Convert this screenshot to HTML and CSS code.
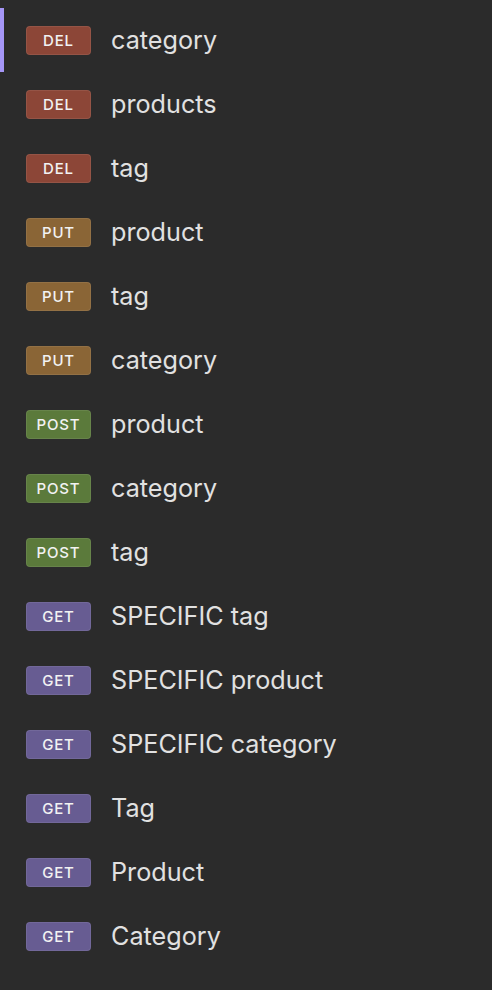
FILE: index.html
```html
<!DOCTYPE html>
<html lang="en">
<head>
<meta charset="utf-8">
<title>Requests</title>
<link rel="stylesheet" href="styles.css">
</head>
<body>
<ul class="req-list">
  <li class="req active"><span class="badge del">DEL</span><span class="name">category</span></li>
  <li class="req"><span class="badge del">DEL</span><span class="name">products</span></li>
  <li class="req"><span class="badge del">DEL</span><span class="name">tag</span></li>
  <li class="req"><span class="badge put">PUT</span><span class="name">product</span></li>
  <li class="req"><span class="badge put">PUT</span><span class="name">tag</span></li>
  <li class="req"><span class="badge put">PUT</span><span class="name">category</span></li>
  <li class="req"><span class="badge post">POST</span><span class="name">product</span></li>
  <li class="req"><span class="badge post">POST</span><span class="name">category</span></li>
  <li class="req"><span class="badge post">POST</span><span class="name">tag</span></li>
  <li class="req"><span class="badge get">GET</span><span class="name">SPECIFIC tag</span></li>
  <li class="req"><span class="badge get">GET</span><span class="name">SPECIFIC product</span></li>
  <li class="req"><span class="badge get">GET</span><span class="name">SPECIFIC category</span></li>
  <li class="req"><span class="badge get">GET</span><span class="name">Tag</span></li>
  <li class="req"><span class="badge get">GET</span><span class="name">Product</span></li>
  <li class="req"><span class="badge get">GET</span><span class="name">Category</span></li>
</ul>
</body>
</html>
```
FILE: styles.css
```css
html, body {
  margin: 0;
  padding: 0;
  background: #2b2b2b;
  height: 100%;
}
body {
  font-family: Inter, "Liberation Sans", sans-serif;
  color: #e1e1e1;
}
.req-list {
  list-style: none;
  margin: 0;
  padding: 8px 0 0 0;
}
.req {
  height: 64px;
  display: flex;
  align-items: center;
  gap: 20px;
  padding-left: 26px;
}
.req.active {
  box-shadow: inset 4px 0 0 #a596f6;
}
.badge {
  box-sizing: border-box;
  width: 65px;
  height: 29px;
  border-radius: 4px;
  display: flex;
  align-items: center;
  justify-content: center;
  font-size: 15px;
  font-weight: 500;
  letter-spacing: 0.8px;
  color: #f2f2f2;
  border: 1px solid rgba(255,255,255,0.08);
}
.badge.del { background: #8c4637; }
.badge.put { background: #8a6536; }
.badge.post { background: #5b7a3b; }
.badge.get { background: #675c92; }
.name {
  font-size: 25.2px;
  line-height: 1;
  padding-top: 2px;
}
```
